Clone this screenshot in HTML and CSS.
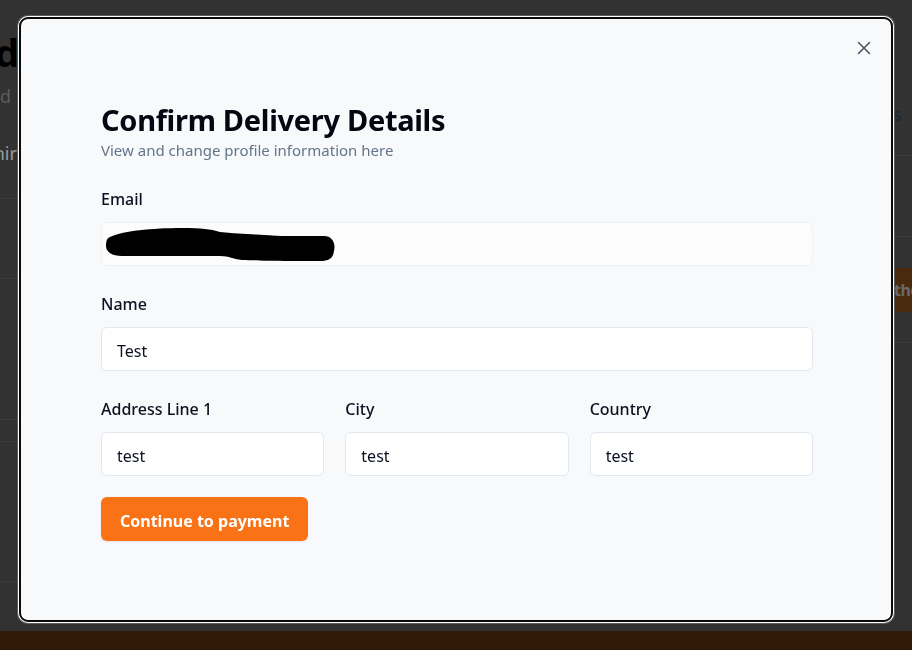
FILE: index.html
```html
<!DOCTYPE html>
<html lang="en">
<head>
<meta charset="utf-8">
<title>Confirm Delivery Details</title>
<link rel="stylesheet" href="styles.css">
</head>
<body>
<div class="page">
  <div class="strips">
    <div class="strip strip-left">
      <div class="bg-title">Ordered</div>
      <div class="bg-sub">Viewed</div>
      <div class="bg-tab">Shirts</div>
      <div class="bg-rule r1"></div>
      <div class="bg-rule r2"></div>
      <div class="bg-rule r3"></div>
      <div class="bg-rule r4"></div>
      <div class="bg-rule r5"></div>
    </div>
    <div class="strip-mid"></div>
    <div class="strip strip-right">
      <div class="bg-s">s</div>
      <div class="bg-rule q1"></div>
      <div class="bg-rule q2"></div>
      <div class="bg-btn">the</div>
      <div class="bg-rule q3"></div>
    </div>
  </div>
  <div class="bg-footer"></div>
</div>

<div class="modal" role="dialog" aria-labelledby="dlg-title">
  <button class="close" aria-label="Close">
    <svg width="14" height="14" viewBox="0 0 14 14"><path d="M1.5 1.5 L12.5 12.5 M12.5 1.5 L1.5 12.5" stroke="#4b5563" stroke-width="1.6" stroke-linecap="round" fill="none"/></svg>
  </button>
  <div class="content">
    <h1 id="dlg-title" class="title">Confirm Delivery Details</h1>
    <p class="subtitle">View and change profile information here</p>

    <div class="field">
      <label class="label">Email</label>
      <div class="input input-disabled">
        <svg class="redact" width="236" height="42" viewBox="0 0 236 42">
          <path d="M8 14 C20 8 50 5 80 5 C100 5 108 6 118 9 C140 11 160 12 180 13 L222 13 C230 13 234 20 232 28 C231 36 226 38 218 38 C200 38 160 38 140 37 C130 36 128 33 118 33 L20 33 C10 33 4 29 4 23 C4 18 5 15 8 14 Z" fill="#000"/>
        </svg>
      </div>
    </div>

    <div class="field">
      <label class="label">Name</label>
      <div class="input">Test</div>
    </div>

    <div class="row">
      <div class="field">
        <label class="label">Address Line 1</label>
        <div class="input">test</div>
      </div>
      <div class="field">
        <label class="label">City</label>
        <div class="input">test</div>
      </div>
      <div class="field">
        <label class="label">Country</label>
        <div class="input">test</div>
      </div>
    </div>

    <button class="cta">Continue to payment</button>
  </div>
</div>
</body>
</html>
```

FILE: styles.css
```css
* { box-sizing: border-box; }
html, body { margin: 0; padding: 0; }
body {
  width: 912px;
  height: 650px;
  overflow: hidden;
  background: #323232;
  font-family: "Noto Sans", "Open Sans", sans-serif;
}

/* ---------- background page (dimmed) ---------- */
.page {
  display: flex;
  flex-direction: column;
  height: 650px;
}
.strips {
  display: flex;
  height: 631px;
}
.strip { overflow: hidden; display: flex; flex-direction: column; }
.strip-left { width: 19px; align-items: flex-end; }
.strip-mid { flex: 1; }
.strip-right { width: 17px; align-items: flex-start; }

.bg-title {
  margin-top: 30px;
  font-size: 38px;
  font-weight: 700;
  line-height: 44px;
  color: #000;
  white-space: nowrap;
}
.bg-sub {
  margin-top: 10px;
  font-size: 18px;
  line-height: 24px;
  color: #5c5c5c;
  white-space: nowrap;
  margin-right: 8px;
}
.bg-tab {
  margin-top: 33px;
  font-size: 18px;
  line-height: 24px;
  color: #9a9a9a;
  white-space: nowrap;
  margin-right: -13px;
}
.bg-rule { width: 40px; height: 1px; background: #3c3c3c; flex: none; }
.r1 { margin-top: 33px; }
.r2 { margin-top: 79px; }
.r3 { margin-top: 140px; }
.r4 { margin-top: 21px; }
.r5 { margin-top: 139px; }

.bg-s {
  margin-top: 102px;
  font-size: 18px;
  line-height: 24px;
  color: #1c2640;
  margin-left: -2px;
}
.q1 { margin-top: 29px; }
.q2 { margin-top: 80px; }
.bg-btn {
  margin-top: 31px;
  width: 60px;
  height: 44px;
  background: #4a2a0e;
  color: #6a6a6a;
  font-weight: 700;
  font-size: 16px;
  letter-spacing: -0.5px;
  line-height: 44px;
  margin-left: -5px;
  text-indent: 4px;
  flex: none;
}
.q3 { margin-top: 30px; }

.bg-footer {
  height: 19px;
  background: #311a08;
}

/* ---------- modal ---------- */
.modal {
  position: fixed;
  left: 19px;
  top: 17px;
  width: 874px;
  height: 605px;
  background: #f8f9fb;
  border: 2px solid #0a0a0a;
  border-radius: 9px;
  box-shadow: 0 0 0 1px #ffffff, 0 0 0 2px #5a5a5a;
}
.close {
  position: absolute;
  top: 19px;
  right: 17px;
  width: 20px;
  height: 20px;
  padding: 0;
  border: 0;
  background: transparent;
  display: flex;
  align-items: center;
  justify-content: center;
}
.content {
  padding: 82px 78px 0 80px;
  display: flex;
  flex-direction: column;
}
.title {
  margin: 0;
  font-size: 29px;
  line-height: 38px;
  font-weight: 700;
  color: #030712;
  letter-spacing: -0.3px;
}
.subtitle {
  margin: 1px 0 27px;
  font-size: 15px;
  line-height: 20px;
  color: #64748b;
}
.field {
  display: flex;
  flex-direction: column;
  margin-bottom: 26px;
}
.label {
  font-size: 16px;
  line-height: 24px;
  font-weight: 500;
  color: #0b1120;
  margin-bottom: 11px;
}
.input {
  height: 44px;
  background: #ffffff;
  border: 1px solid #e2e8f0;
  border-radius: 6px;
  padding: 3px 15px 0;
  display: flex;
  align-items: center;
  font-size: 16px;
  color: #0b1120;
}
.input-disabled {
  background: #fcfcfd;
  border-color: #eef1f5;
  padding: 0;
}
.redact { display: block; }
.row {
  display: grid;
  grid-template-columns: 1fr 1fr 1fr;
  column-gap: 21px;
}
.row .field { margin-bottom: 21px; }
.cta {
  align-self: flex-start;
  height: 44px;
  padding: 3px 19px 0;
  border: 0;
  border-radius: 6px;
  background: #f97316;
  color: #ffffff;
  font-family: inherit;
  font-size: 16px;
  font-weight: 700;
  box-shadow: 0 1px 2px rgba(0,0,0,0.08);
}
```
